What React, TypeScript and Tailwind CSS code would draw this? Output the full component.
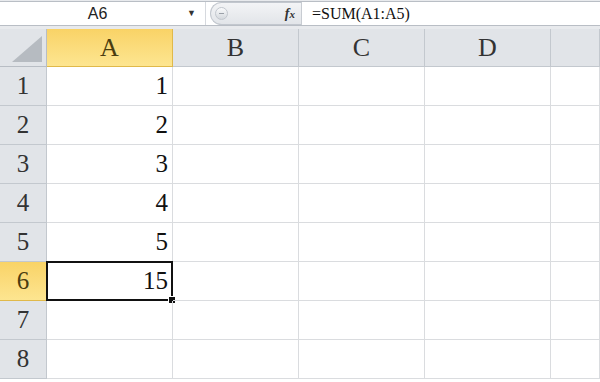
import React from "react";

const cols = ["A", "B", "C", "D", "E"];
const rows = [1, 2, 3, 4, 5, 6, 7, 8];
const values: Record<string, string> = { A1: "1", A2: "2", A3: "3", A4: "4", A5: "5", A6: "15" };

export default function App() {
  const serif = { fontFamily: '"Liberation Serif", "Times New Roman", serif' };
  return (
    <div className="w-[600px] h-[382px] overflow-hidden bg-white" style={serif}>
      {/* formula bar */}
      <div className="h-[29px] bg-[#e8eaed] pt-px">
        <div className="flex h-[25px] bg-white border-t border-b border-[#b9bec5]">
          <div className="w-[206px] flex items-center border-r border-[#d6d9de] relative">
            <span className="flex-1 text-center text-[16px] text-[#222] pl-2" style={{ fontFamily: '"Liberation Sans", Arial, sans-serif' }}>A6</span>
            <span className="w-[14px] text-[9px] text-[#333] mr-1">▼</span>
          </div>
          <div className="w-[96px] flex items-center border-r border-[#c8ccd2] relative">
            <div className="ml-[4px] h-[23px] w-[92px] rounded-l-full bg-gradient-to-b from-[#f3f4f6] to-[#e2e5e9] border border-r-0 border-[#c2c7ce] flex items-center">
              <div className="ml-[4px] w-[13px] h-[13px] rounded-full bg-gradient-to-b from-[#fafbfc] to-[#d4d8dd] border border-[#c2c7ce] flex items-center justify-center">
                <div className="w-[5px] h-px bg-[#9aa0a8]" />
              </div>
              <span className="ml-auto mr-[6px] text-[14px] italic font-bold text-[#333]">f<span className="text-[11px]">x</span></span>
            </div>
          </div>
          <div className="flex-1 flex items-center pl-[10px] text-[16px] text-[#111]">=SUM(A1:A5)</div>
        </div>
      </div>
      {/* sheet */}
      <div className="grid grid-cols-[47px_126px_126px_126px_126px_1fr] grid-rows-[38px_repeat(8,39px)]">
        <div className="bg-[#e1e4e8] border-r border-b border-[#b8bdc4] relative overflow-hidden">
          <svg className="absolute right-[4px] bottom-[4px]" width="30" height="26" viewBox="0 0 30 26">
            <polygon points="30,0 30,26 0,26" fill="#b6bbc1" />
          </svg>
        </div>
        {cols.map((c) => (
          <div
            key={c}
            className={
              "flex items-center justify-center text-[26px] border-r border-b " +
              (c === "A"
                ? "bg-gradient-to-b from-[#f9d366] to-[#fde590] text-[#4b3d10] border-[#e0b94a]"
                : "bg-[#e1e4e8] text-[#333] border-[#c3c8ce]")
            }
          >
            {c === "E" ? "" : c}
          </div>
        ))}
        {rows.map((r) => (
          <React.Fragment key={r}>
            <div
              className={
                "flex items-center justify-center text-[25px] border-r border-b " +
                (r === 6
                  ? "bg-gradient-to-b from-[#f9d366] to-[#fde590] text-[#4b3d10] border-[#e0b94a]"
                  : "bg-[#e1e4e8] text-[#333] border-[#c3c8ce]")
              }
            >
              {r}
            </div>
            {cols.map((c) => {
              const key = c + r;
              const sel = key === "A6";
              return (
                <div
                  key={key}
                  className="relative flex items-center justify-end pr-[4px] text-[25px] text-[#111] border-r border-b border-[#dadcdf]"
                >
                  {values[key]}
                  {sel && (
                    <>
                      <div className="absolute -left-px -top-px -right-px -bottom-px border-2 border-[#111]" />
                      <div className="absolute -right-[4px] -bottom-[4px] w-[6px] h-[6px] bg-[#111] border border-white box-content" />
                    </>
                  )}
                </div>
              );
            })}
          </React.Fragment>
        ))}
      </div>
    </div>
  );
}
